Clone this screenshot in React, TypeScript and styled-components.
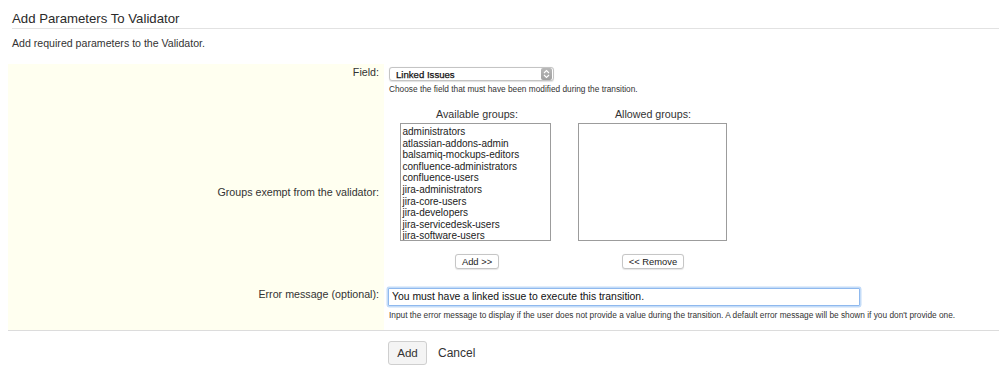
import { FC } from "react";
import styled, { createGlobalStyle } from "styled-components";
//
const GlobalStyle = createGlobalStyle`
  body {
    margin: 0;
    background: #fff;
    color: #333;
    font-family: "Liberation Sans", Arial, sans-serif;
  }
`;
//
const availableGroups = [
  "administrators",
  "atlassian-addons-admin",
  "balsamiq-mockups-editors",
  "confluence-administrators",
  "confluence-users",
  "jira-administrators",
  "jira-core-users",
  "jira-developers",
  "jira-servicedesk-users",
  "jira-software-users",
];
//
interface ListProps {
  items: string[];
  width: number;
  shift?: number;
}
//
const GroupList: FC<ListProps> = ({ items, width, shift = 0 }) => {
  return (
    <ListBox $width={width} $shift={shift}>
      {items.map((g) => (
        <ListItem key={g}>{g}</ListItem>
      ))}
    </ListBox>
  );
};
//
const SelectArrows = () => (
  <ArrowBox>
    <svg width="7" height="10" viewBox="0 0 7 10">
      <path d="M1 4 L3.5 1.5 L6 4" fill="none" stroke="#fff" strokeWidth="1.1" />
      <path d="M1 6 L3.5 8.5 L6 6" fill="none" stroke="#fff" strokeWidth="1.1" />
    </svg>
  </ArrowBox>
);
//
const App: FC = () => {
  return (
    <Page>
      <GlobalStyle />
      <Header>
        <Title>Add Parameters To Validator</Title>
      </Header>
      <Intro>Add required parameters to the Validator.</Intro>
      <FormTable>
        <LabelCell $pad={2}>Field:</LabelCell>
        <FieldCell $pad={3}>
          <FakeSelect>
            <span>Linked Issues</span>
            <SelectArrows />
          </FakeSelect>
          <Help>Choose the field that must have been modified during the transition.</Help>
        </FieldCell>

        <LabelCell $pad={0} $middle>
          Groups exempt from the validator:
        </LabelCell>
        <FieldCell $pad={13}>
          <Groups>
            <GroupColumn>
              <GroupHeading>Available groups:</GroupHeading>
              <GroupList items={availableGroups} width={151} shift={4} />
              <SmallButton>Add &gt;&gt;</SmallButton>
            </GroupColumn>
            <GroupColumn>
              <GroupHeading>Allowed groups:</GroupHeading>
              <GroupList items={[]} width={149} shift={2} />
              <SmallButton>&lt;&lt; Remove</SmallButton>
            </GroupColumn>
          </Groups>
        </FieldCell>

        <LabelCell $pad={5}>Error message (optional):</LabelCell>
        <FieldCell $pad={3} $bottom={9}>
          <TextInput defaultValue="You must have a linked issue to execute this transition." />
          <Help $gap={4}>
            Input the error message to display if the user does not provide a value during the
            transition. A default error message will be shown if you don't provide one.
          </Help>
        </FieldCell>
      </FormTable>
      <Actions>
        <SubmitButton>Add</SubmitButton>
        <CancelLink>Cancel</CancelLink>
      </Actions>
    </Page>
  );
};

export default App;

const Page = styled.div`
  width: 999px;
  height: 390px;
  overflow: hidden;
`;

const Header = styled.div`
  margin-left: 12px;
  padding-top: 11px;
  padding-bottom: 2px;
  border-bottom: 1px solid #e2e2e2;
`;

const Title = styled.h2`
  margin: 0;
  font-size: 13.2px;
  line-height: 15px;
  font-weight: normal;
  color: #2a2a2a;
`;

const Intro = styled.p`
  margin: 8px 0 14px 12px;
  font-size: 10.6px;
  line-height: 13px;
`;

const FormTable = styled.div`
  margin-left: 8px;
  display: grid;
  grid-template-columns: 376px 1fr;
  border-bottom: 1px solid #dcdcdc;
`;

const LabelCell = styled.div<{ $pad: number; $middle?: boolean }>`
  background: #fffff0;
  display: flex;
  justify-content: flex-end;
  align-items: ${(p) => (p.$middle ? "center" : "flex-start")};
  padding: ${(p) => (p.$middle ? 6 : p.$pad)}px 5px 0 0;
  font-size: 10.7px;
  line-height: 13px;
  text-align: right;
`;

const FieldCell = styled.div<{ $pad: number; $bottom?: number }>`
  padding: ${(p) => p.$pad}px 0 ${(p) => p.$bottom ?? 0}px 5px;
`;

const FakeSelect = styled.div`
  box-sizing: border-box;
  width: 165px;
  height: 14px;
  border: 1px solid #c4c4c4;
  border-radius: 3px;
  box-shadow: 0 0.5px 1px rgba(0, 0, 0, 0.12);
  background: #fff;
  display: flex;
  align-items: center;
  justify-content: space-between;
  padding-left: 6px;
  font-size: 9.6px;
  color: #111;
  -webkit-text-stroke: 0.25px #111;
  overflow: hidden;
`;

const ArrowBox = styled.div`
  width: 11px;
  height: 12px;
  margin-right: 1px;
  border-radius: 2px;
  background: linear-gradient(#b8b8b8, #a0a0a0);
  display: flex;
  align-items: center;
  justify-content: center;
`;

const Help = styled.div<{ $gap?: number }>`
  margin-top: ${(p) => p.$gap ?? 3}px;
  font-size: 8.3px;
  line-height: 11px;
  color: #333;
`;

const Groups = styled.div`
  display: flex;
  padding-bottom: 14px;
`;

const GroupColumn = styled.div`
  width: 176px;
  display: flex;
  flex-direction: column;
  align-items: center;
`;

const GroupHeading = styled.div`
  font-size: 10.7px;
  line-height: 13px;
  margin-bottom: 2px;
`;

const ListBox = styled.div<{ $width: number; $shift: number }>`
  box-sizing: border-box;
  width: ${(p) => p.$width}px;
  height: 118px;
  margin-right: ${(p) => p.$shift}px;
  border: 1px solid #9c9c9c;
  background: #fff;
  padding: 2px 0 0 2px;
  overflow: hidden;
`;

const ListItem = styled.div`
  font-size: 10px;
  line-height: 11.6px;
  color: #222;
  white-space: nowrap;
`;

const SmallButton = styled.button`
  margin-top: 13px;
  height: 15px;
  padding: 0 6px;
  border: 1px solid #c6c6c6;
  border-radius: 3px;
  background: #fff;
  box-shadow: 0 0.5px 1px rgba(0, 0, 0, 0.1);
  font-family: "Liberation Sans", Arial, sans-serif;
  font-size: 9.4px;
  line-height: 13px;
  color: #222;
`;

const TextInput = styled.input`
  box-sizing: border-box;
  width: 472px;
  height: 18px;
  margin: 0 0 0 -1px;
  padding: 0 3px;
  border: 1px solid #8fb9ee;
  box-shadow: 0 0 0 1.5px #c4dcf8;
  border-radius: 1px;
  outline: none;
  font-family: "Liberation Sans", Arial, sans-serif;
  font-size: 10.4px;
  color: #111;
`;

const Actions = styled.div`
  display: flex;
  align-items: center;
  gap: 11px;
  padding: 10px 0 0 388px;
`;

const SubmitButton = styled.button`
  box-sizing: border-box;
  width: 39px;
  height: 24px;
  border: 1px solid #cfcfcf;
  border-radius: 3px;
  background: #f4f4f4;
  font-family: "Liberation Sans", Arial, sans-serif;
  font-size: 11.6px;
  color: #333;
  padding: 0;
`;

const CancelLink = styled.span`
  font-size: 12px;
  color: #333;
  cursor: pointer;
`;
